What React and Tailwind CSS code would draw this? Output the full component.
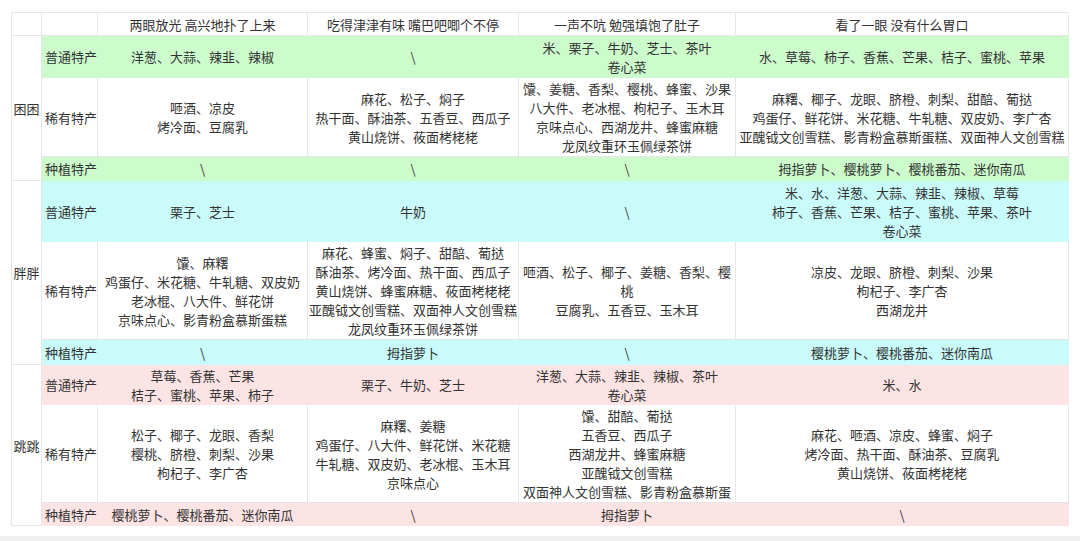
import React from "react";

const headers = [
  "两眼放光 高兴地扑了上来",
  "吃得津津有味 嘴巴吧唧个不停",
  "一声不吭 勉强填饱了肚子",
  "看了一眼 没有什么胃口",
];

const groups = [
  {
    name: "困困",
    bg: "bg-[#ccfccc]",
    rows: [
      {
        label: "普通特产",
        cells: [
          ["洋葱、大蒜、辣韭、辣椒"],
          ["\\"],
          ["米、栗子、牛奶、芝士、茶叶", "卷心菜"],
          ["水、草莓、柿子、香蕉、芒果、桔子、蜜桃、苹果"],
        ],
      },
      {
        label: "稀有特产",
        cells: [
          ["咂酒、凉皮", "烤冷面、豆腐乳"],
          ["麻花、松子、焖子", "热干面、酥油茶、五香豆、西瓜子", "黄山烧饼、莜面栲栳栳"],
          [
            "馕、姜糖、香梨、樱桃、蜂蜜、沙果",
            "八大件、老冰棍、枸杞子、玉木耳",
            "京味点心、西湖龙井、蜂蜜麻糖",
            "龙凤纹重环玉佩绿茶饼",
          ],
          [
            "麻糬、椰子、龙眼、脐橙、刺梨、甜醅、葡挞",
            "鸡蛋仔、鲜花饼、米花糖、牛轧糖、双皮奶、李广杏",
            "亚醜钺文创雪糕、影青粉盒慕斯蛋糕、双面神人文创雪糕",
          ],
        ],
      },
      {
        label: "种植特产",
        cells: [["\\"], ["\\"], ["\\"], ["拇指萝卜、樱桃萝卜、樱桃番茄、迷你南瓜"]],
      },
    ],
  },
  {
    name: "胖胖",
    bg: "bg-[#c9fbfb]",
    rows: [
      {
        label: "普通特产",
        cells: [
          ["栗子、芝士"],
          ["牛奶"],
          ["\\"],
          [
            "米、水、洋葱、大蒜、辣韭、辣椒、草莓",
            "柿子、香蕉、芒果、桔子、蜜桃、苹果、茶叶",
            "卷心菜",
          ],
        ],
      },
      {
        label: "稀有特产",
        cells: [
          ["馕、麻糬", "鸡蛋仔、米花糖、牛轧糖、双皮奶", "老冰棍、八大件、鲜花饼", "京味点心、影青粉盒慕斯蛋糕"],
          [
            "麻花、蜂蜜、焖子、甜醅、葡挞",
            "酥油茶、烤冷面、热干面、西瓜子",
            "黄山烧饼、蜂蜜麻糖、莜面栲栳栳",
            "亚醜钺文创雪糕、双面神人文创雪糕",
            "龙凤纹重环玉佩绿茶饼",
          ],
          ["咂酒、松子、椰子、姜糖、香梨、樱", "桃", "豆腐乳、五香豆、玉木耳"],
          ["凉皮、龙眼、脐橙、刺梨、沙果", "枸杞子、李广杏", "西湖龙井"],
        ],
      },
      {
        label: "种植特产",
        cells: [["\\"], ["拇指萝卜"], ["\\"], ["樱桃萝卜、樱桃番茄、迷你南瓜"]],
      },
    ],
  },
  {
    name: "跳跳",
    bg: "bg-[#fde4e4]",
    rows: [
      {
        label: "普通特产",
        cells: [
          ["草莓、香蕉、芒果", "桔子、蜜桃、苹果、柿子"],
          ["栗子、牛奶、芝士"],
          ["洋葱、大蒜、辣韭、辣椒、茶叶", "卷心菜"],
          ["米、水"],
        ],
      },
      {
        label: "稀有特产",
        cells: [
          ["松子、椰子、龙眼、香梨", "樱桃、脐橙、刺梨、沙果", "枸杞子、李广杏"],
          ["麻糬、姜糖", "鸡蛋仔、八大件、鲜花饼、米花糖", "牛轧糖、双皮奶、老冰棍、玉木耳", "京味点心"],
          [
            "馕、甜醅、葡挞",
            "五香豆、西瓜子",
            "西湖龙井、蜂蜜麻糖",
            "亚醜钺文创雪糕",
            "双面神人文创雪糕、影青粉盒慕斯蛋",
          ],
          ["麻花、咂酒、凉皮、蜂蜜、焖子", "烤冷面、热干面、酥油茶、豆腐乳", "黄山烧饼、莜面栲栳栳"],
        ],
      },
      {
        label: "种植特产",
        cells: [["樱桃萝卜、樱桃番茄、迷你南瓜"], ["\\"], ["拇指萝卜"], ["\\"]],
      },
    ],
  },
];

const line = "border-r border-b border-[#e6e6e6]";

export default function App() {
  return (
    <div
      className="w-[1080px] h-[541px] bg-white text-[#333] text-[13px] leading-[19px] flex flex-col"
      style={{ fontFamily: '"Noto Sans CJK SC", "Noto Sans", sans-serif' }}
    >
      <div className="pt-[12px] pl-[11px]">
        <div className="grid grid-cols-[30px_56px_210px_211px_217px_333px] grid-rows-[23px_42px_79px_24px_61px_98px_25px_40px_98px_23px] border-t border-l border-[#e6e6e6] w-[1057px]">
          {/* header */}
          <div className={line} />
          <div className={line} />
          {headers.map((h) => (
            <div key={h} className={`${line} flex items-center justify-center whitespace-nowrap`}>
              {h}
            </div>
          ))}

          {groups.map((g) => (
            <React.Fragment key={g.name}>
              <div className={`${line} row-span-3 flex items-center justify-center whitespace-nowrap`}>
                {g.name}
              </div>
              {g.rows.map((r) => {
                const white = r.label === "稀有特产";
                const cell = white ? line : `${g.bg} border-r border-b border-transparent`;
                return (
                  <React.Fragment key={r.label}>
                    <div className={`${cell} flex items-center pl-[3px] whitespace-nowrap`}>{r.label}</div>
                    {r.cells.map((lines, i) => (
                      <div
                        key={i}
                        className={`${cell} flex flex-col justify-center overflow-hidden text-center px-[1px]`}
                      >
                        {lines.map((t, j) => (
                          <div key={j} className="whitespace-nowrap">
                            {t}
                          </div>
                        ))}
                      </div>
                    ))}
                  </React.Fragment>
                );
              })}
            </React.Fragment>
          ))}
        </div>
      </div>
      <div className="flex-1" />
      <div className="h-[5px] bg-[#efefef]" />
    </div>
  );
}
